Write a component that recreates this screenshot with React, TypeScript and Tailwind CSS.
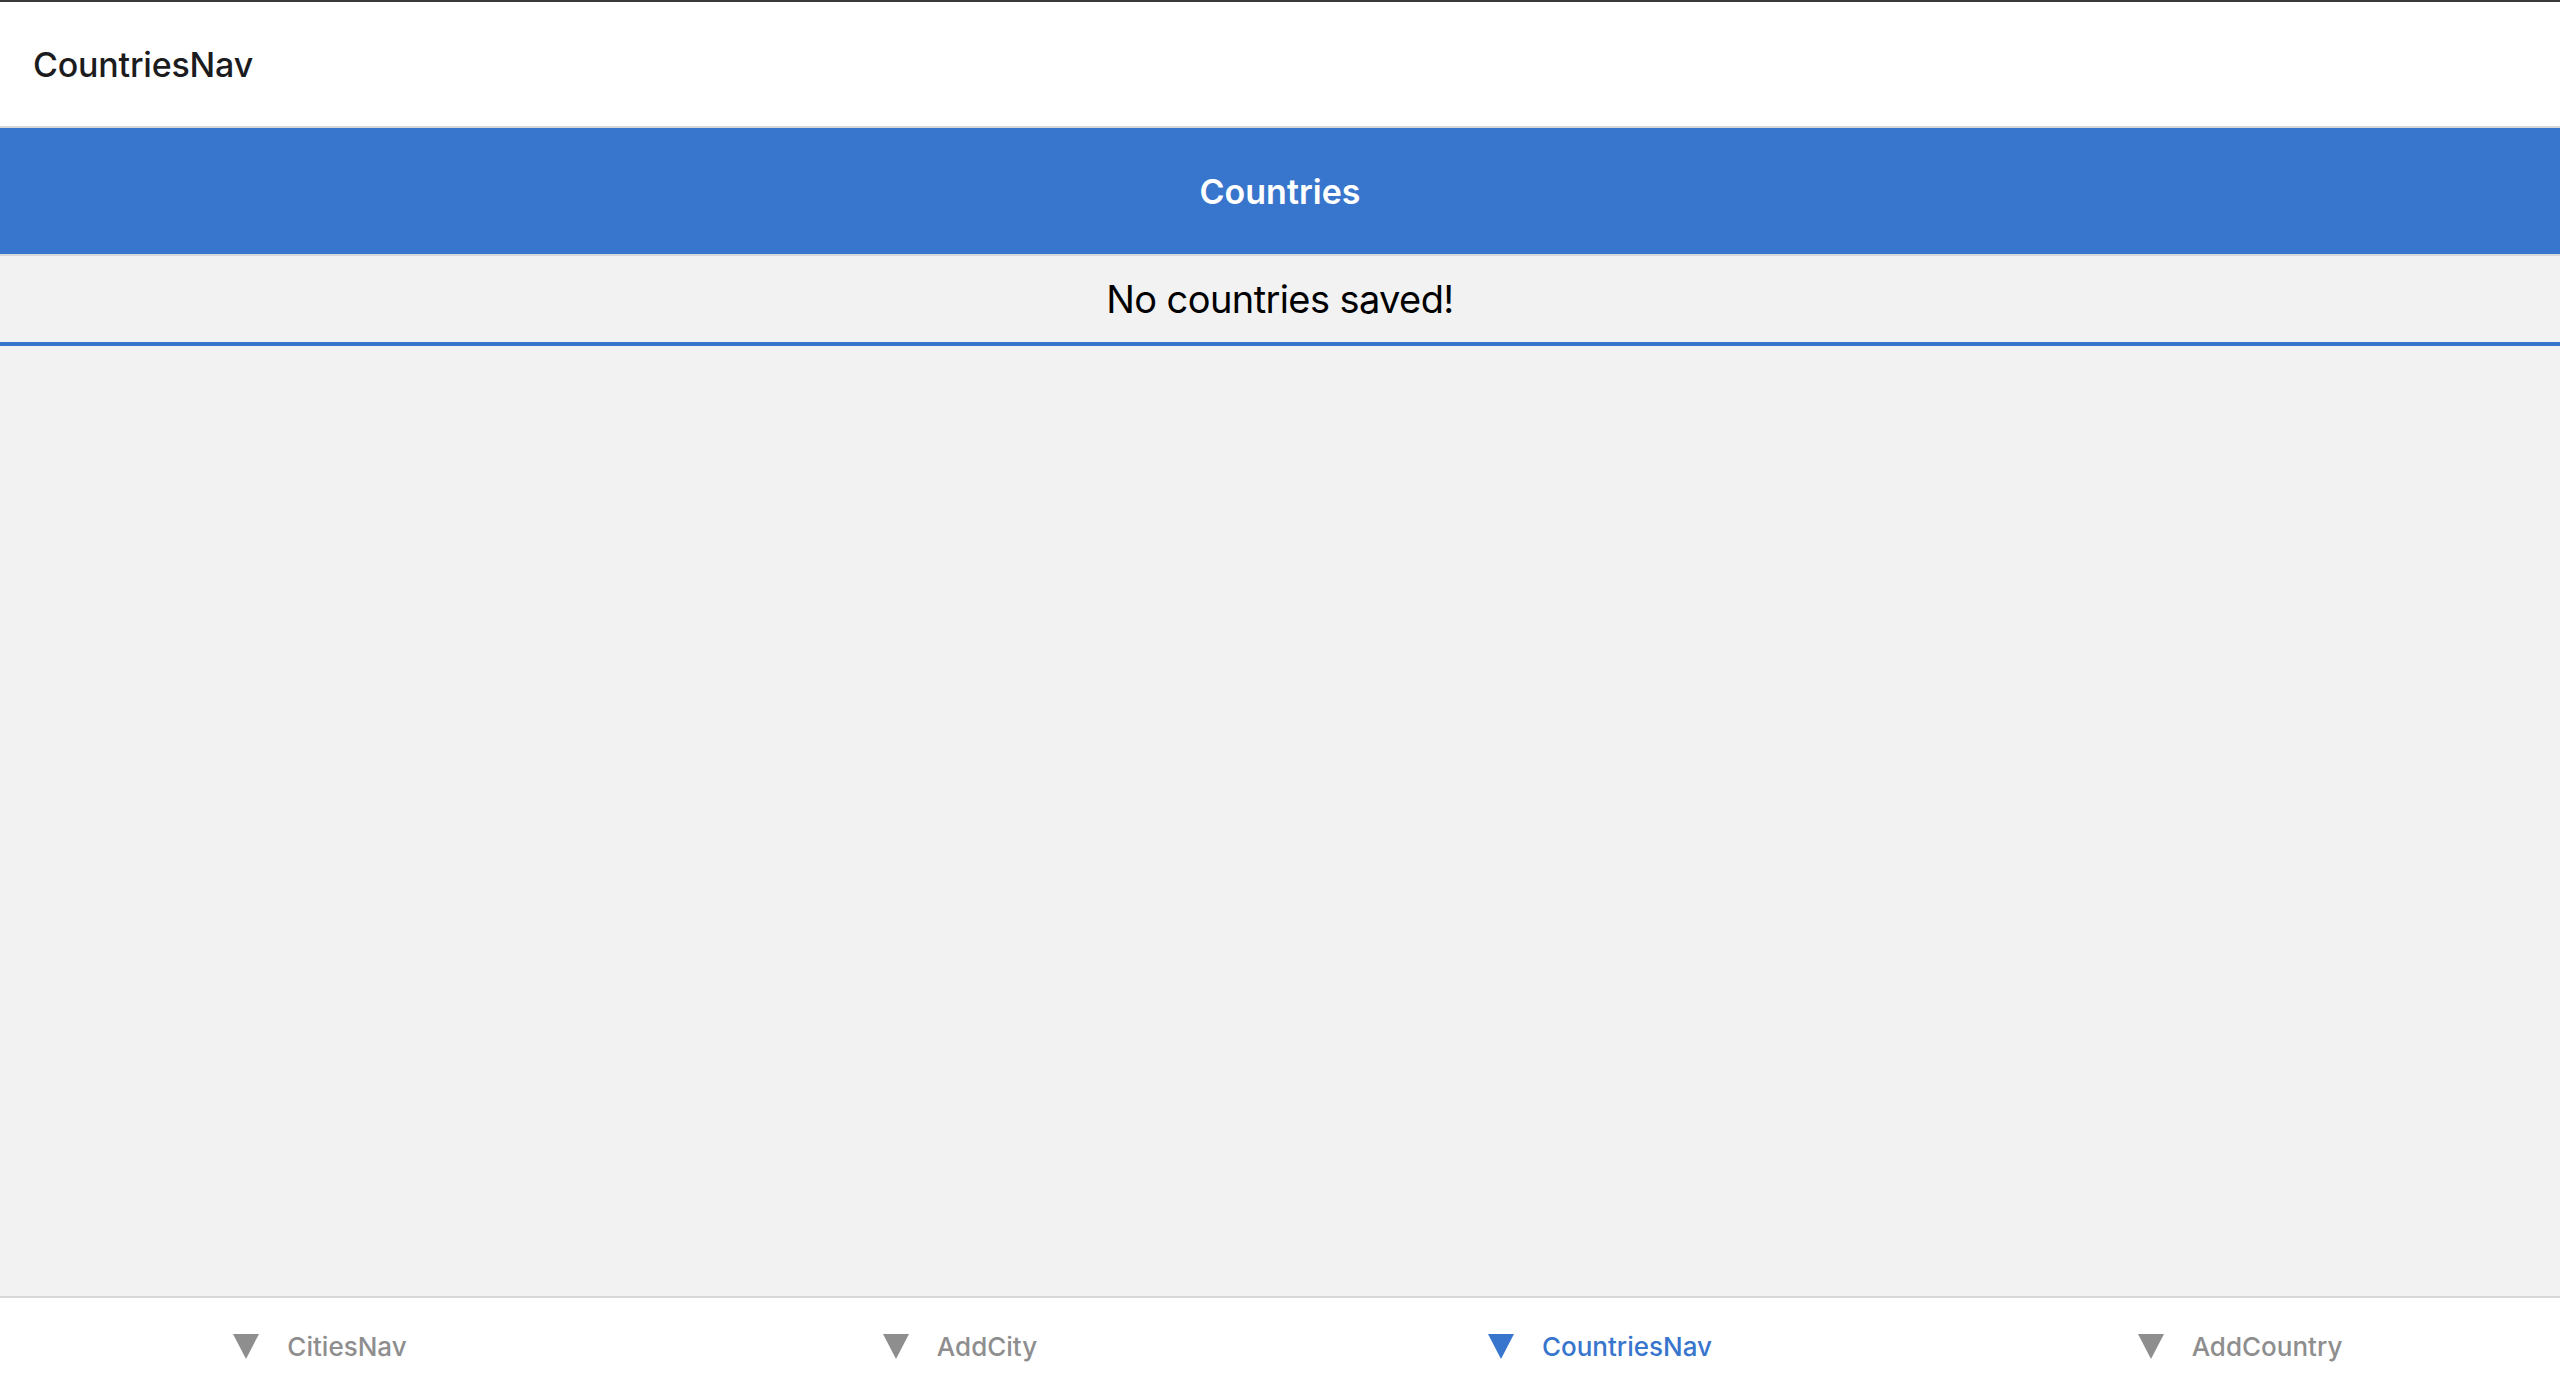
const tabs = [
  { label: "CitiesNav", active: false },
  { label: "AddCity", active: false },
  { label: "CountriesNav", active: true },
  { label: "AddCountry", active: false },
];

function TabIcon({ active }: { active: boolean }) {
  return (
    <svg width="26" height="26" viewBox="0 0 26 26" className={active ? "fill-[#3875cc]" : "fill-[#8e8e8f]"}>
      <polygon points="0,1 26,1 13,26" />
    </svg>
  );
}

export default function App() {
  return (
    <div className="h-screen w-screen flex flex-col bg-[#f2f2f2] font-['Inter','Liberation_Sans',sans-serif]">
      <div className="h-[2px] bg-[#3a3a3a]" />
      <header className="h-[126px] bg-white border-b-2 border-[#d8d8d8] flex items-center px-[33px]">
        <h1 className="text-[34px] font-medium text-[#1c1c1e] tracking-[-0.2px]">CountriesNav</h1>
      </header>
      <div className="h-[128px] bg-[#3875cc] border-b-2 border-[#d8d8d8] flex items-center justify-center">
        <h2 className="text-[34px] font-semibold text-white">Countries</h2>
      </div>
      <div className="h-[90px] border-b-4 border-[#3875cc] flex items-center justify-center">
        <p className="text-[38px] text-black tracking-[-0.6px]">No countries saved!</p>
      </div>
      <main className="flex-1" />
      <nav className="h-[98px] bg-white border-t-2 border-[#d8d8d8] grid grid-cols-4">
        {tabs.map((t) => (
          <div key={t.label} className="flex items-center justify-center gap-[28px]">
            <TabIcon active={t.active} />
            <span className={`text-[26px] font-medium ${t.active ? "text-[#3875cc]" : "text-[#8e8e8f]"}`}>
              {t.label}
            </span>
          </div>
        ))}
      </nav>
    </div>
  );
}
